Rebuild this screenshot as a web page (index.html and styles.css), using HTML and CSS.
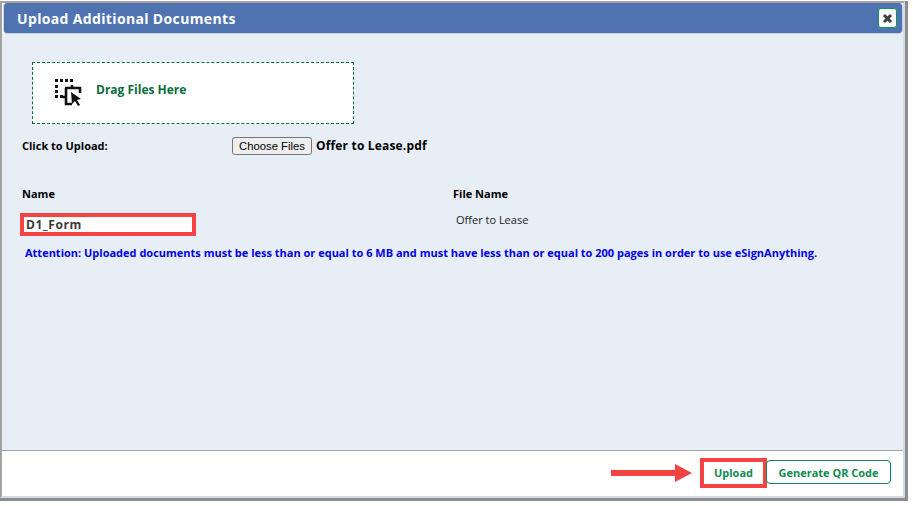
FILE: index.html
```html
<!DOCTYPE html>
<html lang="en">
<head>
    <meta charset="UTF-8">
    <meta name="viewport" content="width=device-width, initial-scale=1.0">
    <title>Upload Additional Documents</title>
    <link rel="stylesheet" href="styles.css">
</head>
<body>
    <div class="dialogShadow">
    <div class="dialog">
        <div class="titleBar">
            <b class="titleText">Upload Additional Documents</b>
            <button class="closeBtn" type="button" aria-label="Close">
                <svg width="11" height="11" viewBox="0 0 11 11"><path d="M2 2 L9 9 M9 2 L2 9" stroke="#3f3f3f" stroke-width="3" fill="none"/></svg>
            </button>
        </div>
        <div class="content">
            <div class="dropZone">
                <svg class="dropIcon" width="28" height="28" viewBox="0 0 28 28">
                    <path d="M1 1h3v3H1zM6 1h3v3H6zM11 1h3v3h-3zM16 1h3v3h-3zM1 7h3v3H1zM1 12h3v3H1zM1 17h3v3H1zM6 17h3v3H6z" fill="#111"/>
                    <path d="M11 10h15v5M18 7v3M12 10v16h6M9 19h3" stroke="#111" stroke-width="2.6" fill="none"/>
                    <path d="M17 14l10 7-4 1 3 5-2 1-3-5-3 3z" fill="#111"/>
                </svg>
                <span class="dropText">Drag Files Here</span>
            </div>
            <div class="uploadRow">
                <label class="uploadLabel">Click to Upload:</label>
                <button class="chooseBtn" type="button">Choose Files</button>
                <span class="fileChosen">Offer to Lease.pdf</span>
            </div>
            <div class="docGrid">
                <b class="colName">Name</b>
                <b class="colFile">File Name</b>
                <input class="nameInput" type="text" value="D1_Form">
                <span class="fileValue">Offer to Lease</span>
            </div>
            <p class="attention">Attention: Uploaded documents must be less than or equal to 6 MB and must have less than or equal to 200 pages in order to use eSignAnything.</p>
        </div>
        <div class="footer">
            <svg class="arrow" width="81" height="18" viewBox="0 0 81 18"><path d="M0 6h64V0l17 9-17 9v-6H0z" fill="#f44343"/></svg>
            <button class="actionBtn uploadBtn" type="button">Upload</button>
            <button class="actionBtn qrBtn" type="button">Generate QR Code</button>
        </div>
    </div>
    </div>
</body>
</html>
```

FILE: styles.css
```css
body {
    margin: 0;
    background: white;
    font-family: "Open Sans", "Noto Sans", sans-serif;
}
.dialogShadow {
    width: 905px;
    margin-top: 1px;
    border-right: 3px solid #8c8c8c;
    border-bottom: 3px solid #8c8c8c;
}
.dialog {
    width: 905px;
    height: 497px;
    border: 2px solid #a3a3a3;
    border-right-color: #d5dbe6;
    border-bottom-color: #d5dbe6;
    box-sizing: border-box;
    display: flex;
    flex-direction: column;
    background: white;
}
.titleBar {
    height: 31px;
    flex: none;
    display: flex;
    align-items: center;
    justify-content: space-between;
    padding: 0 5px 0 13px;
    margin-left: 1px;
    background: #4f73b0;
    border-radius: 4px;
    border: 1px solid #c9d4e6;
    border-top: none;
    box-sizing: border-box;
}
.titleText {
    color: white;
    font-size: 14px;
    letter-spacing: 0.35px;
}
.closeBtn {
    width: 19px;
    height: 20px;
    padding: 0;
    display: flex;
    align-items: center;
    justify-content: center;
    background: white;
    border: 1px solid #12935a;
    border-radius: 3px;
}
.content {
    height: 417px;
    flex: none;
    box-sizing: border-box;
    background: #e7eef6;
    padding: 28px 0 0 18px;
    border-bottom: 1px solid #a3a3a3;
}
.dropZone {
    width: 322px;
    height: 62px;
    margin-left: 12px;
    box-sizing: border-box;
    border: 1px dashed #0b6b3a;
    background: white;
    display: flex;
    align-items: center;
    padding-left: 21px;
}
.dropIcon {
    margin-right: 14px;
    margin-top: -2px;
}
.dropText {
    color: #0b6b3a;
    font-size: 12px;
    font-weight: 700;
    margin-bottom: 8px;
}
.uploadRow {
    display: flex;
    align-items: center;
    height: 18px;
    margin-top: 13px;
    padding-left: 2px;
    color: black;
}
.uploadLabel {
    width: 210px;
    font-size: 11px;
    font-weight: 700;
    margin-bottom: 2px;
}
.chooseBtn {
    width: 80px;
    height: 18px;
    padding: 0;
    background: #efefef;
    border: 1px solid #767676;
    border-radius: 3px;
    font-family: "Liberation Sans", Arial, sans-serif;
    font-size: 11.3px;
    color: black;
}
.fileChosen {
    margin-left: 4px;
    margin-bottom: 2px;
    font-size: 12px;
    font-weight: 700;
    letter-spacing: 0.17px;
}
.docGrid {
    display: grid;
    grid-template-columns: 433px 1fr;
    grid-template-rows: 18px 23px;
    row-gap: 11px;
    margin-top: 29px;
    font-size: 11px;
    align-items: center;
}
.colName {
    padding-left: 2px;
}
.nameInput {
    width: 176px;
    height: 23px;
    box-sizing: border-box;
    border: 4px solid #f44343;
    background: white;
    padding: 0 2px;
    font-family: "Open Sans", "Noto Sans", sans-serif;
    font-size: 12px;
    font-weight: 700;
    letter-spacing: 0.55px;
    color: #3a3a3a;
    outline: none;
}
.fileValue {
    align-self: start;
    padding-left: 3px;
    line-height: 13px;
    font-size: 11px;
    color: #222;
}
.attention {
    margin: 9px 0 0 5px;
    color: #0000e6;
    font-size: 11px;
    font-weight: 700;
}
.footer {
    flex: 1;
    display: flex;
    align-items: center;
    justify-content: flex-end;
    padding: 0 12px 1px 0;
    background: white;
}
.arrow {
    margin-right: 8px;
}
.actionBtn {
    background: white;
    color: #0f8a50;
    font-family: "Open Sans", "Noto Sans", sans-serif;
    font-size: 11px;
    font-weight: 700;
    padding: 0;
}
.uploadBtn {
    width: 67px;
    height: 30px;
    padding-bottom: 2px;
    border: 4px solid #f44343;
}
.qrBtn {
    width: 125px;
    height: 24px;
    margin: -2px 0 0 -1px;
    border: 1px solid #0f8a50;
    border-radius: 4px;
}
```
